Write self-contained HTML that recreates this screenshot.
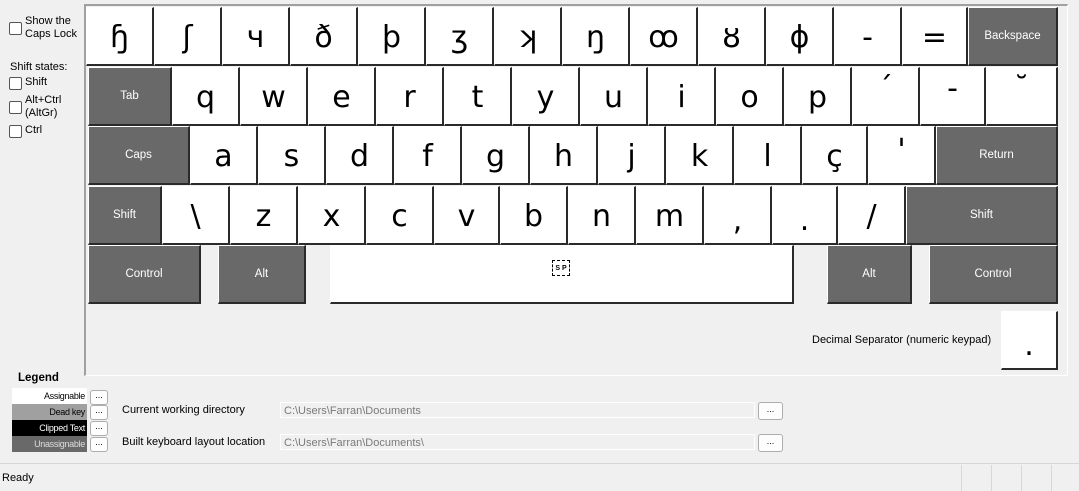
<!DOCTYPE html>
<html><head><meta charset="utf-8"><style>
body{margin:0;width:1079px;height:491px;background:#f0f0f0;font-family:"Liberation Sans","DejaVu Sans",sans-serif;position:relative;overflow:hidden;font-size:11px;color:#000}
.a{position:absolute}
.panel{position:absolute;left:84px;top:4px;width:984px;height:372px;border-top:2px solid #a0a0a0;border-left:2px solid #a0a0a0;border-right:1px solid #fff;border-bottom:1px solid #fff;box-sizing:border-box}
.k{position:absolute;background:#fff;box-sizing:border-box;border-top:1px solid #fff;border-left:1px solid #fff;border-right:2px solid #2a2a2a;border-bottom:2px solid #2a2a2a;text-align:center;font-family:"DejaVu Sans","Noto Sans CJK SC",sans-serif;font-size:30px;line-height:58px;padding-top:1px;height:59px}
.g{background:#696969;color:#fff;font-family:"Liberation Sans","DejaVu Sans",sans-serif;font-size:11.5px;line-height:56px;padding-top:0}
.cb{position:absolute;width:11px;height:11px;border:1px solid #555;border-radius:2px;background:#fff}
.btn{position:absolute;width:16px;height:13px;border:1px solid #adadad;border-radius:3px;background:#fdfdfd;font-size:9px;line-height:8px;text-align:center}
.tb{position:absolute;height:16px;border:1px solid #fff;color:#7a7a7a;font-size:11px;line-height:16px;padding-left:3px;box-sizing:border-box}
.lg{position:absolute;left:12px;width:75px;height:16px;font-size:9px;text-align:right;line-height:16px;padding-right:2px;box-sizing:border-box;letter-spacing:-0.3px}
</style></head><body>
<div class="cb" style="left:9px;top:22px"></div>
<div class="a" style="left:25px;top:15px;line-height:13px">Show the<br>Caps Lock</div>
<div class="a" style="left:10px;top:61px">Shift states:</div>
<div class="cb" style="left:9px;top:77px"></div><div class="a" style="left:25px;top:76px">Shift</div>
<div class="cb" style="left:9px;top:101px"></div><div class="a" style="left:25px;top:94px;line-height:13px">Alt+Ctrl<br>(AltGr)</div>
<div class="cb" style="left:9px;top:125px"></div><div class="a" style="left:25px;top:124px">Ctrl</div>
<div class="panel"></div>
<!-- row1 -->
<div class="k" style="left:86px;top:7px;width:68px">ɧ</div>
<div class="k" style="left:154px;top:7px;width:68px">ʃ</div>
<div class="k" style="left:222px;top:7px;width:68px">ч</div>
<div class="k" style="left:290px;top:7px;width:68px">ð</div>
<div class="k" style="left:358px;top:7px;width:68px">þ</div>
<div class="k" style="left:426px;top:7px;width:68px">ʒ</div>
<div class="k" style="left:494px;top:7px;width:68px">ʞ</div>
<div class="k" style="left:562px;top:7px;width:68px">ŋ</div>
<div class="k" style="left:630px;top:7px;width:68px">ꝏ</div>
<div class="k" style="left:698px;top:7px;width:68px">ȣ</div>
<div class="k" style="left:766px;top:7px;width:68px">ɸ</div>
<div class="k" style="left:834px;top:7px;width:68px">-</div>
<div class="k" style="left:902px;top:7px;width:66px">=</div>
<div class="k g" style="left:968px;top:7px;width:90px">Backspace</div>
<!-- row2 -->
<div class="k g" style="left:88px;top:67px;width:84px">Tab</div>
<div class="k" style="left:172px;top:67px;width:68px">q</div>
<div class="k" style="left:240px;top:67px;width:68px">w</div>
<div class="k" style="left:308px;top:67px;width:68px">e</div>
<div class="k" style="left:376px;top:67px;width:68px">r</div>
<div class="k" style="left:444px;top:67px;width:68px">t</div>
<div class="k" style="left:512px;top:67px;width:68px">y</div>
<div class="k" style="left:580px;top:67px;width:68px">u</div>
<div class="k" style="left:648px;top:67px;width:68px">i</div>
<div class="k" style="left:716px;top:67px;width:68px">o</div>
<div class="k" style="left:784px;top:67px;width:68px">p</div>
<div class="k" style="left:852px;top:67px;width:68px;line-height:40px">´</div>
<div class="k" style="left:920px;top:67px;width:66px;line-height:40px">-</div>
<div class="k" style="left:986px;top:67px;width:72px;line-height:40px">˘</div>
<!-- row3 -->
<div class="k g" style="left:88px;top:126px;width:102px">Caps</div>
<div class="k" style="left:190px;top:126px;width:68px">a</div>
<div class="k" style="left:258px;top:126px;width:68px">s</div>
<div class="k" style="left:326px;top:126px;width:68px">d</div>
<div class="k" style="left:394px;top:126px;width:68px">f</div>
<div class="k" style="left:462px;top:126px;width:68px">g</div>
<div class="k" style="left:530px;top:126px;width:68px">h</div>
<div class="k" style="left:598px;top:126px;width:68px">j</div>
<div class="k" style="left:666px;top:126px;width:68px">k</div>
<div class="k" style="left:734px;top:126px;width:68px">l</div>
<div class="k" style="left:802px;top:126px;width:66px">ç</div>
<div class="k" style="left:868px;top:126px;width:68px;line-height:46px">'</div>
<div class="k g" style="left:936px;top:126px;width:122px">Return</div>
<!-- row4 -->
<div class="k g" style="left:88px;top:186px;width:74px">Shift</div>
<div class="k" style="left:162px;top:186px;width:68px">\</div>
<div class="k" style="left:230px;top:186px;width:68px">z</div>
<div class="k" style="left:298px;top:186px;width:68px">x</div>
<div class="k" style="left:366px;top:186px;width:68px">c</div>
<div class="k" style="left:434px;top:186px;width:66px">v</div>
<div class="k" style="left:500px;top:186px;width:68px">b</div>
<div class="k" style="left:568px;top:186px;width:68px">n</div>
<div class="k" style="left:636px;top:186px;width:68px">m</div>
<div class="k" style="left:704px;top:186px;width:68px;line-height:66px">,</div>
<div class="k" style="left:772px;top:186px;width:66px;line-height:66px">.</div>
<div class="k" style="left:838px;top:186px;width:68px">/</div>
<div class="k g" style="left:906px;top:186px;width:152px">Shift</div>
<!-- row5 -->
<div class="k g" style="left:88px;top:245px;width:113px">Control</div>
<div class="k g" style="left:218px;top:245px;width:88px">Alt</div>
<div class="k" style="left:330px;top:245px;width:464px"></div>
<div class="a" style="left:552px;top:260px;width:18px;height:16px;border:1px dashed #000;font-size:7px;font-weight:bold;text-align:center;line-height:16px;box-sizing:border-box">S P</div>
<div class="k g" style="left:827px;top:245px;width:85px">Alt</div>
<div class="k g" style="left:929px;top:245px;width:129px">Control</div>
<div class="a" style="left:812px;top:334px">Decimal Separator (numeric keypad)</div>
<div class="k" style="left:1001px;top:311px;width:57px;line-height:66px">.</div>
<!-- legend -->
<div class="a" style="left:18px;top:372px;font-weight:bold;font-size:11.5px">Legend</div>
<div class="lg" style="top:388px;background:#fff">Assignable</div>
<div class="lg" style="top:404px;background:#a0a0a0">Dead key</div>
<div class="lg" style="top:420px;background:#000;color:#fff">Clipped Text</div>
<div class="lg" style="top:436px;background:#696969;color:#ddd">Unassignable</div>
<div class="btn" style="left:90px;top:390px">...</div>
<div class="btn" style="left:90px;top:405px">...</div>
<div class="btn" style="left:90px;top:421px">...</div>
<div class="btn" style="left:90px;top:437px">...</div>
<div class="a" style="left:122px;top:404px">Current working directory</div>
<div class="a" style="left:122px;top:436px">Built keyboard layout location</div>
<div class="tb" style="left:280px;top:402px;width:475px">C:\Users\Farran\Documents</div>
<div class="tb" style="left:280px;top:434px;width:475px">C:\Users\Farran\Documents\</div>
<div class="btn" style="left:758px;top:402px;width:23px;height:16px;line-height:12px">...</div>
<div class="btn" style="left:758px;top:434px;width:23px;height:16px;line-height:12px">...</div>
<!-- status -->
<div class="a" style="left:0;top:463px;width:1079px;border-top:1px solid #d7d7d7"></div>
<div class="a" style="left:2px;top:472px">Ready</div>
<div class="a" style="left:961px;top:465px;height:26px;border-left:1px solid #d7d7d7"></div>
<div class="a" style="left:991px;top:465px;height:26px;border-left:1px solid #d7d7d7"></div>
<div class="a" style="left:1021px;top:465px;height:26px;border-left:1px solid #d7d7d7"></div>
<div class="a" style="left:1051px;top:465px;height:26px;border-left:1px solid #d7d7d7"></div>
</body></html>
